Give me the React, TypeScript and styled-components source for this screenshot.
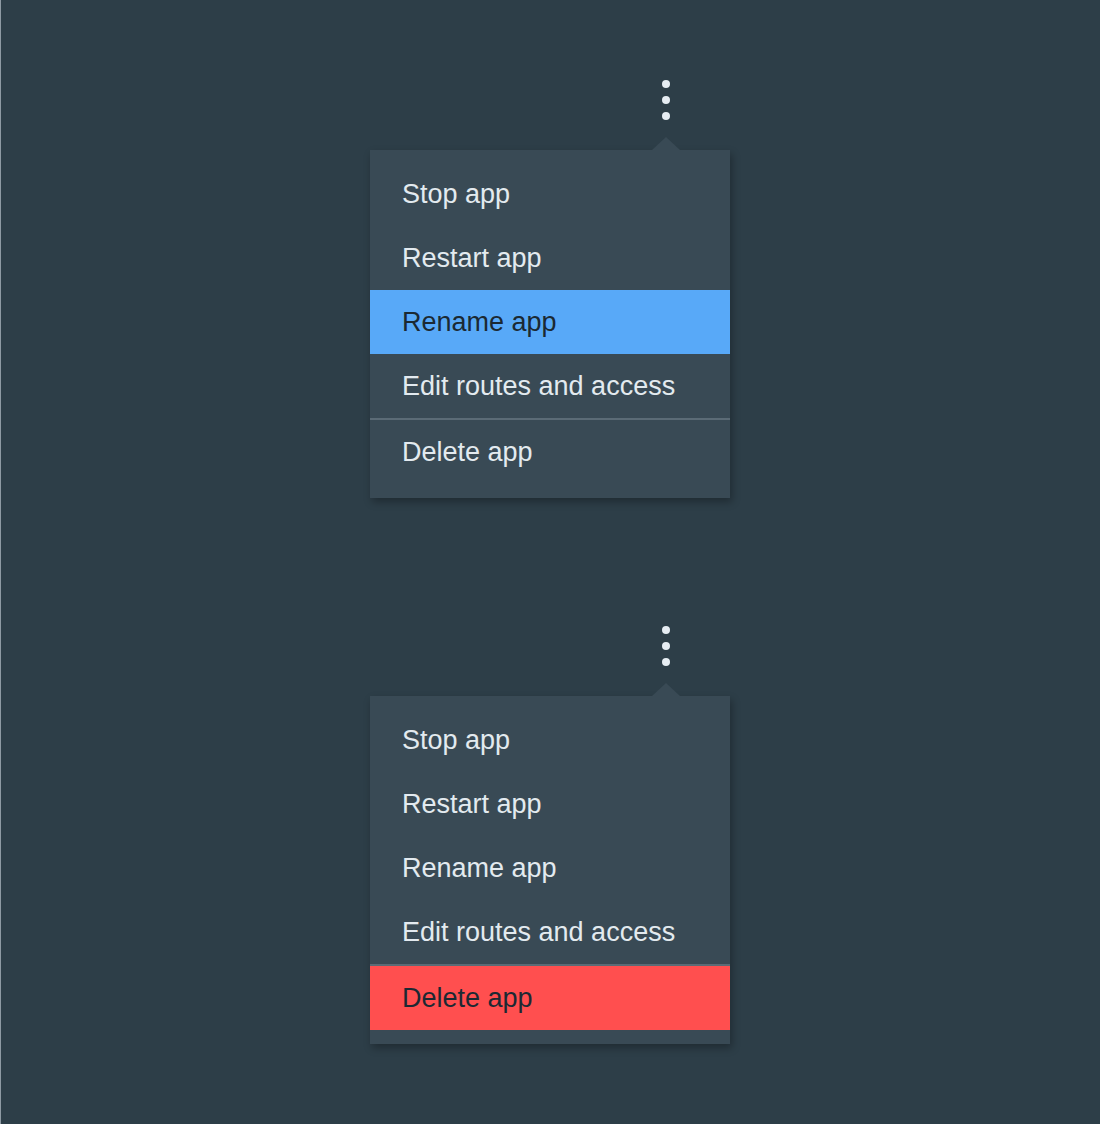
import styled, { createGlobalStyle } from "styled-components";

const GlobalStyle = createGlobalStyle`
  html, body {
    margin: 0;
    padding: 0;
    background: #2d3e48;
  }
  body {
    font-family: "Liberation Sans", Arial, sans-serif;
  }
`;

const Page = styled.div`
  width: 1100px;
  height: 1124px;
  box-sizing: border-box;
  background: #2d3e48;
  border-left: 1px solid #8e9aa3;
  padding: 80px 0 0 369px;
  display: flex;
  flex-direction: column;
  gap: 128px;
`;

const MenuGroup = styled.div`
  display: flex;
  flex-direction: column;
  align-items: flex-start;
`;

const Trigger = styled.button`
  width: 28px;
  height: 40px;
  margin: 0 0 30px 282px;
  padding: 0;
  border: none;
  background: transparent;
  display: flex;
  flex-direction: column;
  align-items: center;
  justify-content: space-between;
  cursor: pointer;
`;

const Dot = styled.span`
  width: 8px;
  height: 8px;
  border-radius: 50%;
  background: #e6edf3;
`;

const Menu = styled.ul`
  position: relative;
  width: 360px;
  margin: 0;
  padding: 12px 0 14px;
  list-style: none;
  background: #394a55;
  box-shadow: 2px 4px 8px rgba(0, 0, 0, 0.3);

  &::before {
    content: "";
    position: absolute;
    top: -13px;
    left: 282px;
    width: 0;
    height: 0;
    border-left: 14px solid transparent;
    border-right: 14px solid transparent;
    border-bottom: 13px solid #394a55;
  }
`;

const Item = styled.li<{ $active?: "blue" | "red"; $divided?: boolean }>`
  height: ${(p) => (p.$divided ? "66px" : "64px")};
  box-sizing: border-box;
  display: flex;
  align-items: center;
  padding: 0 32px;
  font-size: 27px;
  color: ${(p) => (p.$active ? "#1b2933" : "#e3eaef")};
  background: ${(p) =>
    p.$active === "blue" ? "#58a9f8" : p.$active === "red" ? "#ff4f4f" : "transparent"};
  border-top: ${(p) => (p.$divided ? "2px solid #5b6b76" : "none")};
  cursor: pointer;
`;

const items = ["Stop app", "Restart app", "Rename app", "Edit routes and access", "Delete app"];

const ActionMenu = ({ active, tone }: { active: number; tone: "blue" | "red" }) => (
  <MenuGroup>
    <Trigger aria-label="More actions">
      <Dot />
      <Dot />
      <Dot />
    </Trigger>
    <Menu>
      {items.map((label, i) => (
        <Item key={label} $active={i === active ? tone : undefined} $divided={i === 4}>
          {label}
        </Item>
      ))}
    </Menu>
  </MenuGroup>
);

export default function App() {
  return (
    <>
      <GlobalStyle />
      <Page>
        <ActionMenu active={2} tone="blue" />
        <ActionMenu active={4} tone="red" />
      </Page>
    </>
  );
}
